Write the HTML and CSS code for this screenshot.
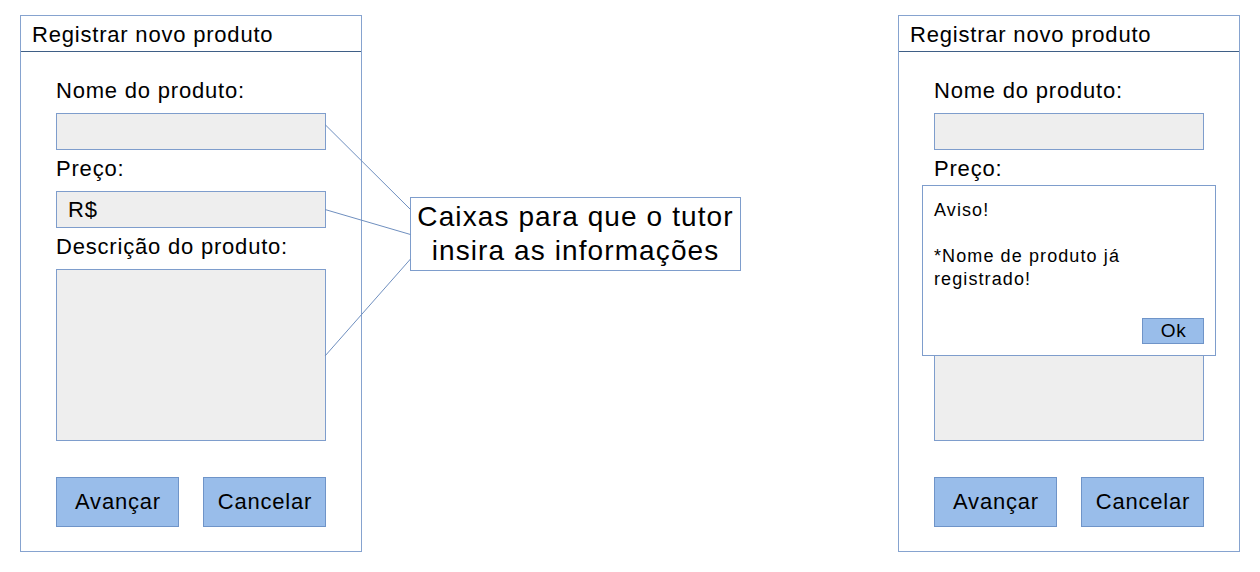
FILE: index.html
```html
<!DOCTYPE html>
<html lang="pt-BR">
<head>
<meta charset="utf-8">
<title>Registrar novo produto</title>
<link rel="stylesheet" href="styles.css">
</head>
<body>
<div class="page">
  <section class="frame">
    <header class="frame-head">Registrar novo produto</header>
    <div class="frame-body">
      <div class="label">Nome do produto:</div>
      <div class="field"></div>
      <div class="label">Preço:</div>
      <div class="field">R$</div>
      <div class="label">Descrição do produto:</div>
      <div class="field area"></div>
      <div class="actions">
        <div class="btn">Avançar</div>
        <div class="btn">Cancelar</div>
      </div>
    </div>
  </section>

  <div class="middle">
    <div class="callout">Caixas para que o tutor<br>insira as informações</div>
  </div>

  <section class="frame">
    <header class="frame-head">Registrar novo produto</header>
    <div class="frame-body">
      <div class="label">Nome do produto:</div>
      <div class="field"></div>
      <div class="label">Preço:</div>
      <div class="field"></div>
      <div class="label covered">Descrição do produto:</div>
      <div class="field area"></div>
      <div class="actions">
        <div class="btn">Avançar</div>
        <div class="btn">Cancelar</div>
      </div>
    </div>
    <div class="dialog">
      <div class="dialog-text">Aviso!<br><br>*Nome de produto já<br>registrado!</div>
      <div class="dialog-actions"><div class="btn small">Ok</div></div>
    </div>
  </section>

  <svg class="connectors" width="1260" height="572" viewBox="0 0 1260 572">
    <line x1="325" y1="124.5" x2="410.5" y2="209.5"/>
    <line x1="325" y1="209.5" x2="410.5" y2="234.5"/>
    <line x1="325" y1="356" x2="410.5" y2="259"/>
  </svg>
</div>
</body>
</html>
```

FILE: styles.css
```css
* { box-sizing: border-box; }

html, body {
  margin: 0;
  padding: 0;
  background: #ffffff;
}

body {
  font-family: "Liberation Sans", Arial, sans-serif;
  color: #000000;
  width: 1260px;
  height: 572px;
  overflow: hidden;
}

.page {
  position: relative;
  display: flex;
  align-items: flex-start;
  padding: 15px 0 0 20px;
  height: 572px;
}

.frame {
  position: relative;
  flex: none;
  width: 342px;
  border: 1px solid #86a3cf;
  background: #ffffff;
}

.frame-head {
  height: 36px;
  padding: 3px 0 0 11px;
  border-bottom: 1px solid #3f5f86;
  font-size: 22px;
  letter-spacing: 0.8px;
  line-height: 32px;
  white-space: nowrap;
}

.frame-body {
  display: flex;
  flex-direction: column;
  padding: 27px 15px 24px 35px;
}

.label {
  height: 24px;
  line-height: 24px;
  font-size: 22px;
  letter-spacing: 0.8px;
  margin-bottom: 10px;
  white-space: nowrap;
}

.label.covered {
  visibility: hidden;
}

.field {
  width: 270px;
  height: 37px;
  background: #eeeeee;
  border: 1px solid #7e9dcc;
  margin-bottom: 7px;
  padding-left: 11px;
  font-size: 22px;
  letter-spacing: 0.8px;
  line-height: 35px;
}

.field.area {
  height: 172px;
  margin-bottom: 36px;
}

.actions {
  display: flex;
  gap: 24px;
  width: 270px;
}

.btn {
  flex: 1;
  height: 50px;
  background: #99bdea;
  border: 1px solid #6f94c8;
  font-size: 22px;
  letter-spacing: 0.8px;
  line-height: 48px;
  text-align: center;
  padding-left: 1px;
}

.middle {
  flex: none;
  width: 536px;
  padding: 182px 0 0 48px;
}

.callout {
  width: 331px;
  height: 74px;
  border: 1px solid #7e9dcc;
  background: #ffffff;
  font-size: 28px;
  letter-spacing: 1.1px;
  line-height: 34px;
  text-align: center;
  padding-top: 2px;
  white-space: nowrap;
}

.dialog {
  position: absolute;
  left: 23px;
  top: 169px;
  width: 294px;
  height: 171px;
  background: #ffffff;
  border: 1px solid #7e9dcc;
  display: flex;
  flex-direction: column;
  justify-content: space-between;
  padding: 13px 11px 11px 11px;
}

.dialog-text {
  font-size: 18px;
  letter-spacing: 1.1px;
  line-height: 23px;
}

.dialog-actions {
  display: flex;
  justify-content: flex-end;
}

.btn.small {
  flex: none;
  width: 62px;
  height: 26px;
  font-size: 19px;
  letter-spacing: 0.6px;
  line-height: 24px;
}

.connectors {
  position: absolute;
  left: 0;
  top: 0;
  pointer-events: none;
}

.connectors line {
  stroke: #6f8fbf;
  stroke-width: 1;
}
```
